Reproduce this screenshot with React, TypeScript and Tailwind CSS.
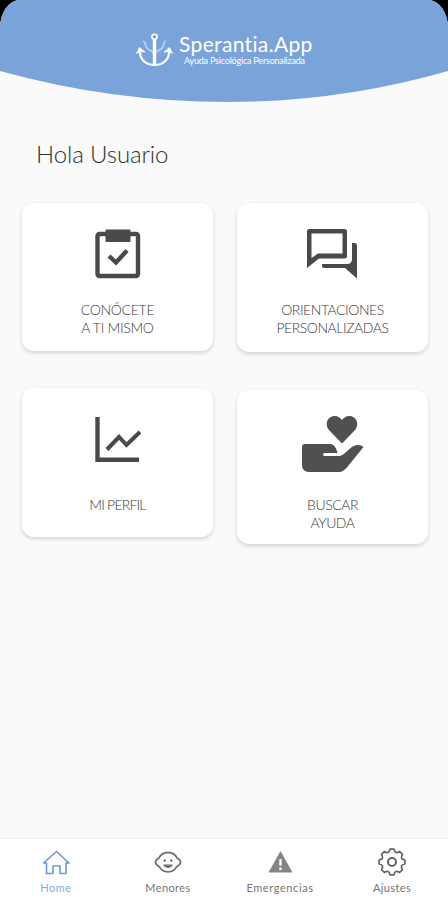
import type { ReactNode } from "react";

function AnchorLogo() {
  return (
    <svg width="38" height="34" viewBox="0 0 38 34" fill="none" stroke="#fff">
      <circle cx="18.5" cy="3.8" r="2.6" strokeWidth="1.6" />
      <path d="M18.5 6.5V32" strokeWidth="3.4" />
      <path d="M4 19c0 8 6.5 13 14.500 13S33 27 33 19" strokeWidth="2.2" />
      <path d="M0.500 20.500l3-6 5.500 4.500-5-.500zM36.500 20.500l-3-6-5.500 4.500 5-.500z" fill="#fff" strokeWidth="0.8" />
      <path
        d="M7 8c4 1 1 6 5 8 3 1.500 5 2.500 6 5M30 8c-4 1-1 6-5 8-3 1.500-5 2.500-6 5"
        strokeWidth="1.800"
        opacity="0.5"
      />
    </svg>
  );
}

function ClipboardIcon() {
  return (
    <svg width="46" height="50" viewBox="0 0 46 50" fill="none" stroke="#48494b">
      <rect x="2.500" y="5" width="40.500" height="42" rx="2" strokeWidth="4.400" />
      <rect x="10.500" y="0.500" width="25" height="12.500" rx="1" fill="#48494b" stroke="none" />
      <path d="M14 27l7 6.500L32 21.500" strokeWidth="4.400" />
    </svg>
  );
}

function ForumIcon() {
  return (
    <svg width="51" height="50" viewBox="0 0 51 50" fill="#48494b">
      <path
        fillRule="evenodd"
        d="M2.500 0H37.500Q40 0 40 2.500V27Q40 29.500 37.500 29.500H12L0 39V2.500Q0 0 2.500 0zM4.500 4.500V29L11 24.500H35.500V4.500z"
      />
      <path d="M45 14h2.500Q50 14 50 17V49.500L38 39H17Q15 39 15 37V35H40Q45 35 45 30z" />
    </svg>
  );
}

function ChartIcon() {
  return (
    <svg width="46" height="46" viewBox="0 0 46 46" fill="none" stroke="#48494b">
      <path d="M2.500 0V42.700H44" strokeWidth="4.400" />
      <path d="M12 32.500L24 20l7.500 8L45 15" strokeWidth="4" />
    </svg>
  );
}

function HandHeartIcon() {
  return (
    <svg width="62" height="57" viewBox="0 0 62 57" fill="#505050">
      <path d="M40 27.500L26.500 13.500C22 7 26.500 0 32.500 0c3.500 0 6 2 7.500 4C41.500 2 44 0 47.500 0c6 0 10.500 7 6 13.500z" />
      <path d="M3 28H28C32 28 35 33 35.500 37H23q-2 0-2 1.500t2 1.500H38C43 38.500 48 31 53 29.500c3-1 7 0 8.500 1.500L44.500 52q-4 4-7 4H6Q0 55 0 49V31q0-3 3-3z" />
    </svg>
  );
}

function HomeIcon() {
  return (
    <svg width="28" height="26" viewBox="0 0 28 26" fill="none" stroke="#6d97d1" strokeWidth="1.600">
      <path d="M4.500 14H1.500L14.500 2.500 27 14H24V24.500H18V17H11V24.500H4.500z" strokeLinejoin="round" />
    </svg>
  );
}

function ChildIcon() {
  return (
    <svg width="28" height="26" viewBox="0 0 28 26" fill="none" stroke="#707070" strokeWidth="1.800">
      <path
        d="M14 3.500C18.500 3.500 21.500 5.500 23 9c2 1 3.500 3 3.500 4.200s-1.500 3-3.500 4.200C21 21 18.500 22.800 14 22.800S7 21 5 17.400C3 16.200 1.500 14.500 1.500 13.200s1.500-3.200 3.500-4.200C6.500 5.500 9.500 3.500 14 3.500z"
        strokeLinejoin="round"
      />
      <g fill="#707070" stroke="none">
        <circle cx="10.700" cy="11.500" r="1.200" />
        <circle cx="17.300" cy="11.500" r="1.200" />
        <path d="M9 15.500h10c-.8 2.300-2.700 3.500-5 3.500s-4.200-1.200-5-3.500z" />
      </g>
    </svg>
  );
}

function WarningIcon() {
  return (
    <svg width="28" height="26" viewBox="0 0 28 26" fill="#848484">
      <path
        fillRule="evenodd"
        d="M14.500 2l12 21.500H2.500zM13.300 10v6.500h2.400V10zM13.300 18.500v2.400h2.400v-2.400z"
      />
    </svg>
  );
}

function GearIcon() {
  return (
    <svg width="28" height="28" viewBox="0 0 28 28" fill="none" stroke="#636363" strokeWidth="1.700" strokeLinejoin="round">
      <path d="M11.970 1.160L16.030 1.160Q17.060 6.610 21.640 3.480L24.520 6.360Q21.390 10.940 26.840 11.970L26.840 16.030Q21.390 17.060 24.520 21.640L21.640 24.520Q17.060 21.390 16.030 26.840L11.970 26.840Q10.940 21.390 6.360 24.520L3.480 21.640Q6.610 17.060 1.160 16.030L1.160 11.970Q6.610 10.940 3.480 6.360L6.360 3.480Q10.940 6.610 11.970 1.160z" />
      <circle cx="14" cy="14" r="4" strokeWidth="2" />
    </svg>
  );
}

function Card({ icon, className, children }: { icon: ReactNode; className: string; children: ReactNode }) {
  return (
    <button
      className={`flex flex-col items-center rounded-xl bg-white text-sm leading-[17.5px] font-light text-[#383838] shadow-[0_2px_4px_rgba(0,0,0,0.16)] ${className}`}
    >
      {icon}
      {children}
    </button>
  );
}

const tabs = [
  { label: "Home", icon: <HomeIcon />, style: "text-[#85a9d8] tracking-[0.5px]" },
  { label: "Menores", icon: <ChildIcon />, style: "text-[#747474] tracking-[0.4px]" },
  { label: "Emergencias", icon: <WarningIcon />, style: "text-[#747474] tracking-[0.6px]" },
  { label: "Ajustes", icon: <GearIcon />, style: "text-[#747474] tracking-[0.4px]" },
];

export default function App() {
  return (
    <div className="bg-black font-[Lato,sans-serif]">
      <div className="flex h-[900px] w-[448px] flex-col overflow-hidden rounded-tl-[20px_28px] rounded-tr-[20px_28px] bg-[#fafafa]">
        <header className="relative h-[102px] shrink-0">
          <svg className="absolute inset-0" width="448" height="102" viewBox="0 0 448 102">
            <path d="M0 0H448V71Q340 102 228 102Q112 102 0 71z" fill="#7aa3da" />
          </svg>
          <div className="relative flex pt-[33px] pl-[136px] text-white">
            <AnchorLogo />
            <div className="ml-[5px] whitespace-nowrap">
              <div className="text-[21px] leading-[22px] tracking-[0.35px]">Sperantia.App</div>
              <div className="mt-px ml-[5px] text-[9px] leading-[10px] tracking-[-0.2px]">
                Ayuda Psicológica Personalizada
              </div>
            </div>
          </div>
        </header>

        <main className="flex-1">
          <h1 className="mt-[37px] ml-[36px] text-2xl leading-[30px] font-light tracking-[-0.1px] text-[#303030]">
            Hola Usuario
          </h1>
          <div className="mt-[34px] grid grid-cols-[191px_191px] items-start gap-x-6 pl-[22px]">
            <Card icon={<ClipboardIcon />} className="h-[148px] pt-[26px]">
              <div className="mt-[22px] tracking-[-0.3px]">
                CONÓCETE
                <br />A TI MISMO
              </div>
            </Card>
            <Card icon={<ForumIcon />} className="h-[149px] pt-[26px]">
              <div className="mt-[22px] tracking-[-0.45px]">
                ORIENTACIONES
                <br />
                PERSONALIZADAS
              </div>
            </Card>
            <Card icon={<ChartIcon />} className="mt-9 h-[149px] pt-[29px]">
              <div className="mt-[33px] tracking-[-0.8px]">MI PERFIL</div>
            </Card>
            <Card icon={<HandHeartIcon />} className="mt-[38px] h-[154px] pt-[26px]">
              <div className="mt-[23px] tracking-[-0.45px]">
                BUSCAR
                <br />
                AYUDA
              </div>
            </Card>
          </div>
        </main>

        <nav className="grid h-[62px] grid-cols-4 border-t border-[#f0f0f0] bg-white">
          {tabs.map((tab) => (
            <div key={tab.label} className="flex flex-col items-center pt-[9px]">
              <div className="flex h-7 items-center">{tab.icon}</div>
              <span className={`mt-1 text-[11px] leading-4 ${tab.style}`}>{tab.label}</span>
            </div>
          ))}
        </nav>
      </div>
    </div>
  );
}
